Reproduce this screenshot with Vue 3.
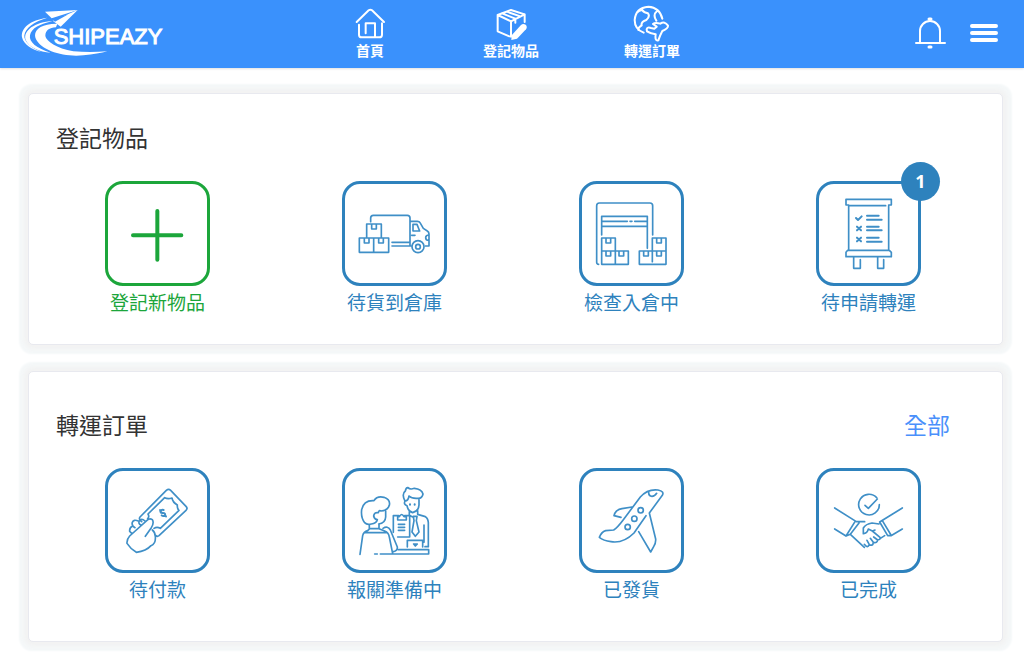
<script setup>
const nav = [
  {
    label: '首頁',
    box: '30 0 120 126',
    lines: 'M50 66L86 31Q91 27 96 31L132 66 M57 74V104Q57 112 65 112H118Q126 112 126 104V70 M77 100V70H105V111',
    solid: ''
  },
  {
    label: '登記物品',
    box: '453 0 120 126',
    lines: 'M513 110V64L473 45V94L508 109 M473 45L513 30L554 43V66 M513 64L554 43 M486 40L526 56V68 M500 35L541 49',
    solid: 'M515 106L543 75Q549 69 557 74Q563 80 558 88L531 116L514 120Z'
  },
  {
    label: '轉運訂單',
    box: '876 0 120 126',
    lines: 'M911 98Q884 88 884 60Q887 23 925 20Q959 22 967 56 M890 39Q897 30 907 30Q911 38 924 40Q931 50 919 60Q902 66 905 76Q893 84 895 90 M952 32Q937 44 949 62 M920 88Q922 80 933 84L943 86L950 80L939 72Q945 66 961 71Q974 62 984 77Q985 85 967 93Q959 108 955 121Q944 124 947 103Q932 101 921 94Z',
    solid: ''
  }
]

const cards = [
  {
    title: '登記物品',
    more: '',
    tiles: [
      { label: '登記新物品', add: true, box: '54 43 297 297', lines: 'M202 124V270 M129 197H274', bold: '', rings: [] },
      {
        label: '待貨到倉庫',
        box: '45 43 297 297',
        lines: 'M122 156V145Q122 137 130 137H232Q240 137 240 145V229H244 M186 218H240 M186 229H240 M240 155H262Q268 155 270 159L280 176L292 184Q297 187 297 193V229H286 M249 164H261L269 184H249Z M245 197H255 M297 196Q287 196 287 204T297 212 M88 205H131V248H88Z M131 205H176V248H131 M110 205V163H154V205 M103 205V220H117V205 M146 205V220H160V205 M125 163V178H139V163',
        bold: '',
        rings: [[264, 231, 18], [264, 231, 7]]
      },
      {
        label: '檢查入倉中',
        box: '36 43 297 297',
        lines: 'M86 284Q80 284 80 278V108Q80 100 88 100H240Q248 100 248 108V196 M95 196V140H232V236 M95 155H172 M180 155H186 M194 155H232 M95 170H232 M95 205H136V284H95Z M95 244H175V284H136 M208 244H288V284H208Z M247 276V205H288V244 M108 205V220H122V205 M108 244V259H122V244 M147 244V259H161V244 M221 244V259H235V244 M260 205V220H274V205 M260 244V259H274V244',
        bold: '',
        rings: []
      },
      {
        label: '待申請轉運',
        badge: 1,
        box: '56 103 297 297',
        lines: 'M145 166H137V149H273V166H265 M145 168H256 M145 168V302 M265 168V302 M142 302H267L273 308V321H137V308Z M160 321V356H180V330 M232 321V356H250V330',
        bold: 'M200 198H235 M200 210H244 M200 231H235 M200 242H244 M200 264H235 M200 276H244 M167 205L173 211L184 200 M170 231L182 242 M182 231L170 242 M170 264L182 275 M182 264L170 275',
        rings: []
      }
    ]
  },
  {
    title: '轉運訂單',
    more: '全部',
    tiles: [
      {
        label: '待付款',
        box: '54 34 297 297',
        lines: 'M155 186Q145 178 150 172L229 92Q236 86 242 92L288 140Q294 146 288 152L207 228Q202 232 197 227 M173 177Q179 171 174 163L224 114Q233 119 246 115Q248 128 262 136Q261 147 267 152L211 206Q201 200 192 206 M166 230L184 204Q193 190 187 180Q179 175 171 182L119 229Q110 239 111 251Q122 268 139 278Q169 274 183 258Q198 253 196 230Q195 217 187 211 M165 184Q154 174 148 184Q144 192 153 196 M145 184Q131 178 127 188Q124 198 135 204 M127 200Q118 204 119 215L126 222',
        bold: 'M221 151Q212 149 211 156Q212 161 219 160Q227 160 225 168Q219 171 215 167 M210 151L214 154 M225 168L228 170',
        rings: []
      },
      {
        label: '報關準備中',
        box: '45 34 297 297',
        lines: 'M104 189Q92 174 95 150Q101 121 132 123Q141 108 162 113Q182 120 178 137Q174 152 153 154Q147 150 145 159Q133 157 131 169Q133 179 142 180Q139 191 124 193Q111 197 104 189 M167 154V172Q166 191 146 193 M118 194V207H147V194 M90 284L98 228Q101 216 113 213L119 207 M147 207L164 214Q176 219 178 232L188 282 M106 219H169 M159 206Q173 197 181 211L202 262Q203 274 190 276 M134 283H142 M151 283H296V270H205 M206 168H190V218 M224 168H239V232H203 M203 181V171H208Q215 158 222 171H229V181Z M205 194H224 M205 203H224 M205 212H224 M225 124Q214 103 226 94Q228 83 234 84Q240 91 253 86Q275 88 279 103Q276 118 262 116Q245 117 237 109Q234 125 225 124Q220 134 231 138Q234 155 248 159Q266 154 267 136V118 M238 155V167L248 172 M263 153V164L286 171Q294 175 295 189V261H285 M282 196V248 M250 170H261L259 183L267 217L256 230L246 217L252 183Z M232 262V242H278V262 M251 253H262L256 259Z',
        bold: 'M240 134V135 M254 134V135',
        rings: []
      },
      {
        label: '已發貨',
        box: '36 34 297 297',
        lines: 'M228 168L192 220Q160 252 123 246Q100 243 88 233Q94 217 107 213L131 211Q142 204 160 180L211 112Q233 87 264 91Q284 95 277 107L238 160L257 238Q258 250 251 261L242 277L206 216 M236 96Q235 109 246 110Q254 110 260 101 M186 142L156 147Q136 150 132 168L153 173',
        bold: '',
        rings: [[212, 152, 8], [193, 177, 8], [173, 202, 8]]
      },
      {
        label: '已完成',
        box: '56 214 297 297',
        lines: 'M229 294A31 31 0 1 0 237 315 M194 317L204 326L231 298 M103 325L168 366H193 M103 388L137 409L164 366 M137 409L150 404L176 370 M306 325L238 367L262 408H272L306 388 M246 363L272 406 M150 404L192 443 M236 373L215 370Q196 373 189 385V402Q201 401 204 388L216 394L224 391 M216 394L239 413Q242 419 232 421L220 412 M232 421Q231 431 219 428L210 416 M219 428Q218 440 207 435L200 422 M207 435Q202 447 192 434 M239 417L253 408',
        bold: '',
        rings: []
      }
    ]
  }
]
</script>

<template>
  <div class="page">
    <header class="bar">
      <a class="logo" href="#" aria-label="SHIPEAZY">
        <svg width="147" height="49" viewBox="60 21 441 147">
          <g fill="#fff">
            <path d="M172 71C122 70 96 92 108 118C125 152 190 172 250 166Q295 162 322 154Q270 158 220 154C170 146 138 122 136 108C136 90 148 84 168 82Z" />
            <path d="M158 63C104 66 68 92 77 120C86 142 118 156 152 158C110 146 86 126 90 106C94 84 120 72 158 63Z" />
            <path d="M142 53C90 60 62 84 66 112C71 134 96 150 124 156C92 144 71 124 73 106C76 84 100 66 142 53Z" />
            <path d="M135 35L233 30L155 55Z" />
            <path d="M233 30L182 80L158 62Z" />
          </g>
          <path d="M155 57L205 43L165 65Z" fill="#3a91fc" />
          <text class="wordmark" x="161" y="132">SHIPEAZY</text>
        </svg>
      </a>
      <nav class="nav">
        <a v-for="item in nav" :key="item.label" class="nav-item" href="#">
          <svg width="40" height="42" :viewBox="item.box" aria-hidden="true">
            <path class="nav-line" :d="item.lines" />
            <path v-if="item.solid" :d="item.solid" fill="#fff" />
          </svg>
          <span>{{ item.label }}</span>
        </a>
      </nav>
      <div class="actions">
        <button class="icon-button" type="button" aria-label="通知">
          <svg width="32" height="32" viewBox="0 0 32 32" fill="none" stroke="#fff" stroke-width="2" stroke-linecap="round">
            <path d="M2 26H31 M6 26V14A10 10 0 0 1 26 14V26" />
            <path d="M15 2H17 M15 30H17" stroke-width="3" />
          </svg>
        </button>
        <button class="icon-button" type="button" aria-label="選單">
          <svg width="28" height="20" viewBox="0 0 28 20" stroke="#fff" stroke-width="4" stroke-linecap="round">
            <path d="M2 3H26 M2 10H26 M2 17H26" />
          </svg>
        </button>
      </div>
    </header>

    <main class="content">
      <section v-for="card in cards" :key="card.title" class="card" :class="{ roomy: card.more }">
        <div class="card-head">
          <h2>{{ card.title }}</h2>
          <a v-if="card.more" class="more" href="#">{{ card.more }}</a>
        </div>
        <div class="tiles">
          <a v-for="tile in card.tiles" :key="tile.label" class="tile" :class="{ add: tile.add }" href="#">
            <span class="frame">
              <svg class="glyph" :viewBox="tile.box" aria-hidden="true">
                <path :d="tile.lines" />
                <path v-if="tile.bold" class="bold" :d="tile.bold" />
                <circle v-for="(ring, i) in tile.rings" :key="i" :cx="ring[0]" :cy="ring[1]" :r="ring[2]" />
              </svg>
              <span v-if="tile.badge" class="badge">{{ tile.badge }}</span>
            </span>
            <span class="label">{{ tile.label }}</span>
          </a>
        </div>
      </section>
    </main>
  </div>
</template>

<style>
body {
  margin: 0;
  background: #fff;
}
</style>

<style scoped>
.page {
  font-family: "Noto Sans CJK TC", "Noto Sans", sans-serif;
  color: #333;
}
a {
  text-decoration: none;
  color: inherit;
}
svg {
  display: block;
}
.bar {
  display: grid;
  grid-template-columns: 1fr auto 1fr;
  height: 68px;
  box-sizing: border-box;
  padding: 0 22px 0 20px;
  background: #3a91fc;
  box-shadow: 0 1px 2px #0000001f;
}
.logo {
  justify-self: start;
  padding-top: 7px;
}
.wordmark {
  font-family: "Liberation Sans", Arial, sans-serif;
  font-size: 66px;
  fill: #fff;
  stroke: #fff;
  stroke-width: 3px;
}
.nav {
  display: grid;
  grid-template-columns: repeat(3, 141px);
}
.nav-item {
  display: flex;
  flex-direction: column;
  align-items: center;
  color: #fff;
  font-size: 14px;
  font-weight: 700;
  line-height: 16px;
}
.nav-line {
  fill: none;
  stroke: #fff;
  stroke-width: 6px;
  stroke-linecap: round;
  stroke-linejoin: round;
}
.actions {
  display: flex;
  align-items: center;
  justify-content: flex-end;
  gap: 24px;
  padding: 0 4px 2px 0;
}
.icon-button {
  padding: 0;
  border: 0;
  background: none;
}
.content {
  display: flex;
  flex-direction: column;
  gap: 26px;
  padding: 25px 21px 13px 28px;
}
.card {
  box-sizing: border-box;
  padding: 26px 15px 28px 10px;
  border: 1px solid #e8e9ef;
  border-radius: 5px;
  background: #fff;
  box-shadow: 0 0 5px 4px #f2f2f2, 0 0 2px 9px #f5f8f9;
}
.card.roomy {
  padding-top: 35px;
  padding-bottom: 38px;
}
.card-head {
  display: flex;
  justify-content: space-between;
  margin: 0 37px 27px 17px;
  font-size: 23px;
  line-height: 34px;
}
h2 {
  margin: 0;
  font-size: 23px;
  font-weight: 400;
}
.more {
  color: #4a90fb;
}
.tiles {
  display: grid;
  grid-template-columns: repeat(4, 1fr);
}
.tile {
  display: flex;
  flex-direction: column;
  align-items: center;
  gap: 2px;
  color: #2e82bd;
}
.tile.add {
  color: #1ca63b;
}
.frame {
  position: relative;
  width: 99px;
  height: 99px;
  border: 3px solid currentColor;
  border-radius: 18px;
}
.glyph {
  width: 100%;
  height: 100%;
  fill: none;
  stroke: #3f8fc7;
  stroke-width: 5px;
  stroke-linecap: round;
  stroke-linejoin: round;
}
.glyph .bold {
  stroke-width: 6px;
}
.add .glyph {
  stroke: currentColor;
  stroke-width: 12px;
}
.badge {
  position: absolute;
  top: -22px;
  right: -22px;
  width: 39px;
  height: 39px;
  border-radius: 50%;
  background: #2e82bd;
  color: #fff;
  font: 700 18px/39px "Open Sans", "Noto Sans", sans-serif;
  text-align: center;
}
.label {
  font-size: 19px;
  line-height: 28px;
}
</style>
